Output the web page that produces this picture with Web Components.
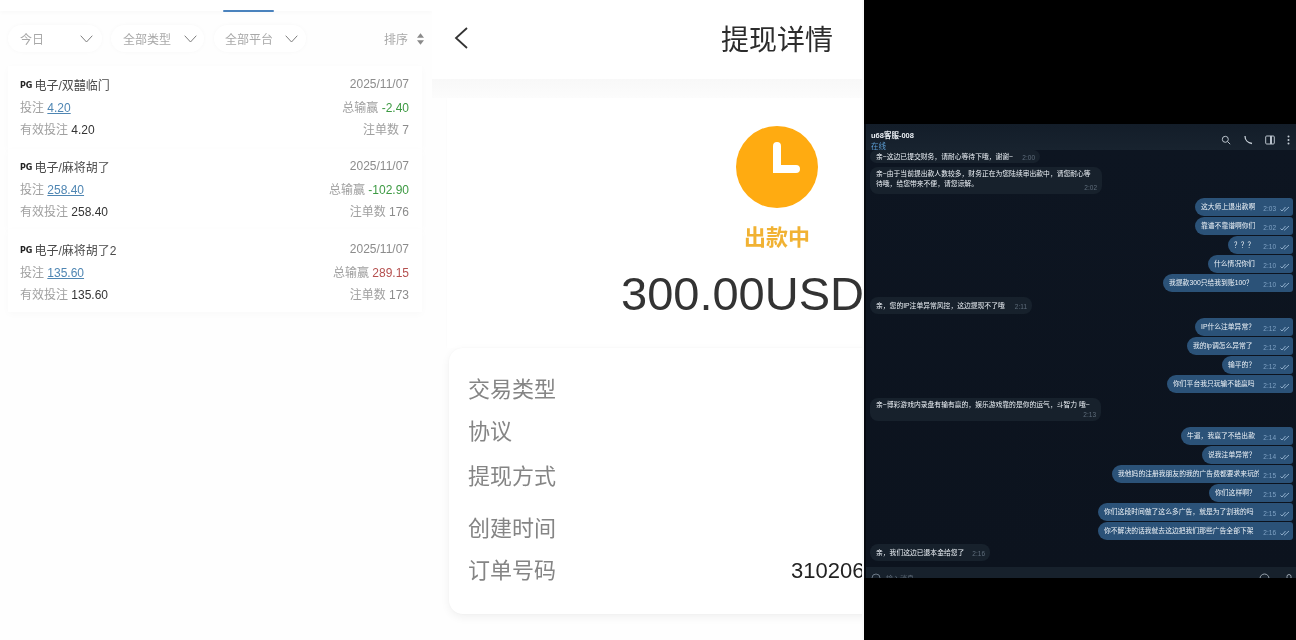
<!DOCTYPE html>
<html lang="zh"><head><meta charset="utf-8"><title>UI</title>
<style>
html,body{margin:0;padding:0;background:#000}
body{width:1296px;height:640px;overflow:hidden;font-family:"Liberation Sans","Noto Sans CJK SC",sans-serif}
</style></head><body>
<triple-view>
  <bet-panel>
    <filter-pill slot="filters" style="--w:94px;--pr:9px;--pl:12px">今日</filter-pill>
    <filter-pill slot="filters" style="--w:93px;--pr:7px;--pl:12px">全部类型</filter-pill>
    <filter-pill slot="filters" style="--w:92px;--pr:8px;--pl:11px;margin-left:1px">全部平台</filter-pill>
    <bet-card title="电子/双囍临门" date="2025/11/07" bet="4.20" net="-2.40" tone="loss" count="7" style="--h:83px;--pt:7px"></bet-card>
    <bet-card title="电子/麻将胡了" date="2025/11/07" bet="258.40" net="-102.90" tone="loss" count="176" style="--h:80px;--pt:6px"></bet-card>
    <bet-card title="电子/麻将胡了2" date="2025/11/07" bet="135.60" net="289.15" tone="win" count="173" style="--h:83px;--pt:9px"></bet-card>
  </bet-panel>
  <withdraw-panel>
    <detail-row style="--gap:0px">交易类型</detail-row>
    <detail-row style="--gap:16px">协议</detail-row>
    <detail-row style="--gap:19px">提现方式</detail-row>
    <detail-row style="--gap:26px">创建时间</detail-row>
    <detail-row style="--gap:16px" value="310206198800">订单号码</detail-row>
  </withdraw-panel>
  <chat-panel>
    <chat-bubble time="2:00" style="--w:170px;--h:13px;--mt:0px">亲~这边已提交财务，请耐心等待下哦，谢谢~</chat-bubble>
    <chat-bubble time="2:02" stack style="--w:232px;--h:27px;--mt:4px">亲~由于当前提出款人数较多，财务正在为您陆续审出款中，请您耐心等待哦，给您带来不便，请您谅解。</chat-bubble>
    <chat-bubble out time="2:03" style="--w:98px;--mt:4px">这大师上退出款啊</chat-bubble>
    <chat-bubble out time="2:02" style="--w:98px">靠谱不靠谱啊你们</chat-bubble>
    <chat-bubble out time="2:10" style="--w:65px">？？？</chat-bubble>
    <chat-bubble out time="2:10" style="--w:85px">什么情况你们</chat-bubble>
    <chat-bubble out time="2:10" style="--w:130px">我提款300只给我到账100？</chat-bubble>
    <chat-bubble time="2:11" style="--w:162px;--h:17px;--mt:5px">亲，您的IP注单异常风控，这边提现不了哦</chat-bubble>
    <chat-bubble out time="2:12" style="--w:98px;--mt:4px">IP什么注单异常？</chat-bubble>
    <chat-bubble out time="2:12" style="--w:106px">我的ip调怎么异常了</chat-bubble>
    <chat-bubble out time="2:12" style="--w:71px">输平的？</chat-bubble>
    <chat-bubble out time="2:12" style="--w:126px">你们平台我只玩输不能赢吗</chat-bubble>
    <chat-bubble time="2:13" stack style="--w:231px;--h:23px;--mt:5px">亲~博彩游戏内录盘有输有赢的，娱乐游戏靠的是你的运气，斗智力 哦~</chat-bubble>
    <chat-bubble out time="2:14" style="--w:112px;--mt:6px">牛逼，我赢了不给出款</chat-bubble>
    <chat-bubble out time="2:14" style="--w:91px">说我注单异常？</chat-bubble>
    <chat-bubble out time="2:15" style="--w:181px">我他妈的注册我朋友的我的广告费都要求来玩的</chat-bubble>
    <chat-bubble out time="2:15" style="--w:84px">你们这样啊？</chat-bubble>
    <chat-bubble out time="2:15" style="--w:195px">你们这段时间做了这么多广告，就是为了割我的吗</chat-bubble>
    <chat-bubble out time="2:16" style="--w:195px">你不解决的话我就去这边把我们那些广告全部下架</chat-bubble>
    <chat-bubble time="2:16" style="--w:120px;--h:17px;--mt:4px">亲，我们这边已退本金给您了</chat-bubble>
  </chat-panel>
</triple-view>
<script>
const def=(n,html)=>{customElements.define(n,class extends HTMLElement{
  connectedCallback(){if(this.shadowRoot)return;const s=this.attachShadow({mode:'open'});s.innerHTML=typeof html==='function'?html(this):html;}
})};
const chev='<svg width="13" height="8" viewBox="0 0 13 8" fill="none" stroke="#7d7d7d" stroke-width="1"><path d="M.7.7 6.5 7 12.3.7"/></svg>';
def('triple-view',`<style>:host{display:grid;grid-template-columns:432px 432px 432px;width:1296px;height:640px;overflow:hidden}</style><slot></slot>`);
def('filter-pill',`<style>:host{display:flex;align-items:center;justify-content:space-between;box-sizing:border-box;width:var(--w);height:27px;padding:0 var(--pr) 0 var(--pl);border-radius:14px;background:#fff;color:#a8a8a8;font-size:12px;box-shadow:0 0 4px rgba(0,0,0,.03)}</style><span><slot></slot></span>${chev}`);
def('bet-panel',`<style>
:host{display:block;height:640px;background:#fefefe;overflow:hidden;filter:blur(.3px)}
.tabs{height:11px;background:#fff;display:flex;padding-left:223px;box-shadow:0 2px 4px rgba(0,0,0,.025)}
.tabs i{display:block;width:51px;height:2px;margin-top:9.5px;background:#4a82bd;border-radius:1px}
.bar{display:flex;align-items:center;gap:9px;padding:14px 8px 0 8px;height:27px;color:#a8a8a8;font-size:12px}
.sort{margin-left:auto;display:flex;align-items:center;gap:9px}
.list{margin:14px 10px 0 8px;display:flex;flex-direction:column}
</style>
<div class="tabs"><i></i></div>
<div class="bar"><slot name="filters"></slot><span class="sort">排序<svg width="7" height="12" viewBox="0 0 8 13" fill="#8a8a8a"><path d="M4 0 8 5H0zM4 13 0 8h8z"/></svg></span></div>
<div class="list"><slot></slot></div>`);
def('bet-card',el=>{const a=n=>el.getAttribute(n)||'';const col=a('tone')==='win'?'#b5504f':'#3d9a43';
return `<style>
:host{display:block;box-sizing:border-box;height:var(--h);padding:var(--pt) 13px 0 12px;background:#fff;font-size:12px;color:#a0a0a0;box-shadow:0 2px 8px rgba(0,0,0,.025)}
.r{display:flex;justify-content:space-between;align-items:center;height:22px}
.r:first-child{height:14px;margin-bottom:4px}
.t{color:#4a4a4a;display:flex;align-items:center;gap:2px}.pg{font:700 8px "DejaVu Sans",sans-serif;color:#222;position:relative;top:1px}
a{color:#4f86b3;text-decoration:underline}b{font-weight:400;color:#333}em{font-style:normal;color:${col}}.c{color:#8c8c8c}
</style>
<div class="r"><span class="t"><span class="pg">PG</span>${a('title')}</span><span class="c">${a('date')}</span></div>
<div class="r"><span>投注 <a>${a('bet')}</a></span><span>总输赢 <em>${a('net')}</em></span></div>
<div class="r"><span>有效投注 <b>${a('bet')}</b></span><span>注单数 <span class="c">${a('count')}</span></span></div>`});
def('withdraw-panel',`<style>
:host{display:block;height:640px;background:#fefefe;overflow:hidden;position:relative;filter:blur(.25px)}
:host::after{content:"";position:absolute;top:0;right:0;width:2px;height:640px;background:#f9f9f9}
.in{width:690px;height:640px;display:flex;flex-direction:column}
header{height:79px;flex:none;background:#fff;display:grid;grid-template-columns:1fr auto 1fr;align-items:center;padding-bottom:3px;box-sizing:border-box;font-size:28px;color:#2c2c2c}
header svg{margin-left:22px;display:block}
.band{height:19px;flex:none;background:linear-gradient(#f8f8f8,#fcfcfc)}
.top{height:250px;flex:none;background:#fff;margin-left:15px;box-shadow:-1px 0 2px rgba(0,0,0,.012);display:flex;flex-direction:column;align-items:center;padding-right:15px;box-sizing:border-box;width:675px}
.clock{margin-top:28px;display:block;flex:none}
.st{font-size:22px;font-weight:700;color:#f1b233;line-height:26px;margin-top:17px;text-align:center}
.amt{font-size:47px;line-height:54px;color:#333;align-self:flex-start;margin:16px 0 0 174px;white-space:nowrap}
.card{margin:0 0 0 17px;width:660px;height:266px;box-sizing:border-box;flex:none;border-radius:14px;background:#fff;box-shadow:0 3px 10px rgba(0,0,0,.06),0 0 2px rgba(0,0,0,.03);padding:29px 0 0 19px}
</style>
<div class="in">
<header><svg width="14" height="22" viewBox="0 0 14 22" fill="none" stroke="#333" stroke-width="1.8"><path d="M13 1 2 11 13 21"/></svg><span>提现详情</span><span></span></header>
<div class="band"></div>
<div class="top">
<svg class="clock" width="82" height="82" viewBox="0 0 82 82"><circle cx="41" cy="41" r="41" fill="#ffab11"/><path d="M41 20V43H60" fill="none" stroke="#fff" stroke-width="8" stroke-linecap="round"/></svg>
<div class="st">出款中</div><div class="amt">300.00USDT</div></div>
<div class="card"><slot></slot></div></div>`);
def('detail-row',el=>`<style>:host{display:grid;grid-template-columns:323px auto;font-size:22px;line-height:26px;color:#858585;margin-top:var(--gap)}.v{color:#222}</style><span><slot></slot></span><span class="v">${el.getAttribute('value')||''}</span>`);
def('chat-panel',`<style>
:host{display:flex;flex-direction:column;height:640px;background:#000;overflow:hidden}
.sp1{height:124px;flex:none}.sp2{flex:1}
.wrap{height:454px;flex:none;display:flex;flex-direction:column;background:#0d1622;border-left:2px solid #060a10;box-sizing:border-box;filter:blur(.2px)}
header{height:26px;flex:none;display:flex;align-items:flex-start;justify-content:space-between;padding:6px 6px 0 5px;box-sizing:border-box;background:linear-gradient(#131d29,#18232f);color:#e8edf2;font-size:7.5px}
.n{font-weight:700;line-height:11px}.o{color:#5b9bd0;line-height:11px}
.ic{display:flex;gap:12px;align-items:center;margin-top:5px}
.body{flex:1;display:flex;flex-direction:column;padding:0 3px 0 4px;overflow:hidden;background:linear-gradient(#0d1521,#0c131e)}
footer{height:11px;flex:none;display:flex;align-items:flex-start;justify-content:space-between;background:#17212c;padding:6px 4px 0 5px;box-sizing:border-box;overflow:hidden;color:#5e6b78;font-size:7px}
footer span{display:flex;gap:5px;align-items:center}footer .ic{gap:16px;margin-top:0}
</style>
<div class="sp1"></div>
<div class="wrap">
<header><div><div class="n">u68客服-008</div><div class="o">在线</div></div>
<div class="ic">
<svg width="10" height="10" viewBox="0 0 10 10" fill="none" stroke="#b9c2cb" stroke-width="1"><circle cx="4.3" cy="4.3" r="3"/><path d="m6.6 6.6 2.6 2.6"/></svg>
<svg width="10" height="10" viewBox="0 0 10 10" fill="none" stroke="#c5ced6" stroke-width="1.3"><path d="M2 1c0 4 3 7 7 7.5"/></svg>
<svg width="10" height="10" viewBox="0 0 10 10" fill="none" stroke="#b9c2cb" stroke-width="1"><rect x=".7" y="1" width="8.6" height="8" rx="1"/><path d="M6 1v8" stroke-width="2"/></svg>
<svg width="3" height="10" viewBox="0 0 3 10" fill="#c5ced6"><circle cx="1.5" cy="1.5" r="1"/><circle cx="1.5" cy="5" r="1"/><circle cx="1.5" cy="8.5" r="1"/></svg>
</div></header>
<div class="body"><slot></slot></div>
<footer><span><svg width="10" height="10" viewBox="0 0 10 10" fill="none" stroke="#6c7986"><circle cx="5" cy="5" r="4"/></svg>输入消息...</span>
<div class="ic"><svg width="11" height="11" viewBox="0 0 11 11" fill="none" stroke="#9aa5af"><circle cx="5.5" cy="5.5" r="4.5"/></svg><svg width="6" height="9" viewBox="0 0 6 9" fill="none" stroke="#9aa5af"><rect x="1" y=".5" width="4" height="8" rx="2"/></svg></div></footer>
</div><div class="sp2"></div>`);
def('chat-bubble',el=>{const out=el.hasAttribute('out'),stack=el.hasAttribute('stack');
const tick=out?'<svg width="10" height="6" viewBox="0 0 10 6" fill="none" stroke="#a9c6e2" stroke-width=".8"><path d="M.5 3.5 2 5 5.5 1M4 4.5 4.6 5 9 1"/></svg>':'';
return `<style>
:host{display:block;box-sizing:border-box;width:var(--w);margin-top:var(--mt,1px);flex:none;align-self:${out?'flex-end':'flex-start'};font-size:6.8px;line-height:10px;color:#eef3f8}
.b{box-sizing:border-box;height:var(--h,18px);display:flex;align-items:center;justify-content:space-between;gap:4px;padding:0 ${out?'3px':'5px'} 0 6px;background:${out?'#2b5278':'#17212c'};border-radius:${out?'9px 3px 3px 9px':'8px'}}
.b.s{display:block;padding-top:2px;position:relative}
.m{white-space:${stack?'normal':'nowrap'};overflow:hidden}
.t{flex:none;color:${out?'#7fa2c4':'#5f6d7b'};display:flex;gap:4px;align-items:center;font-size:6.5px;margin-top:3px}
.s .t{position:absolute;right:5px;bottom:1px}
</style><div class="b ${stack?'s':''}"><span class="m"><slot></slot></span><span class="t">${el.getAttribute('time')}${tick}</span></div>`});
</script>
</body></html>
